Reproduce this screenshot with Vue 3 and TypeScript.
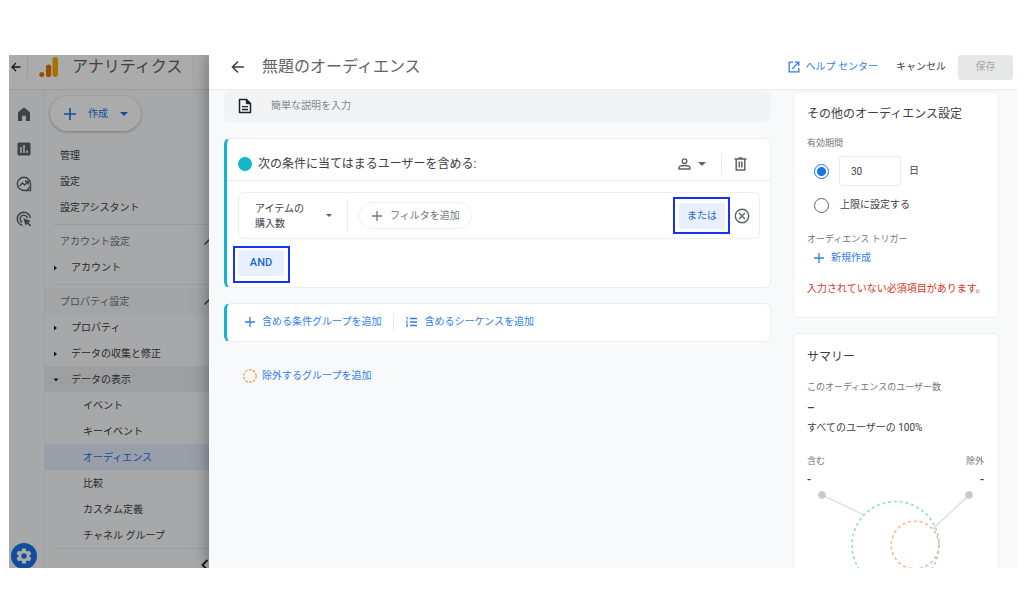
<script setup lang="ts">
import { ref } from 'vue'

interface NavRow {
  label: string
  kind: 'plain' | 'heading' | 'closed' | 'open' | 'child'
  active?: boolean
}

const navGroups: NavRow[][] = [
  [
    { label: '管理', kind: 'plain' },
    { label: '設定', kind: 'plain' },
    { label: '設定アシスタント', kind: 'plain' },
  ],
  [
    { label: 'アカウント設定', kind: 'heading' },
    { label: 'アカウント', kind: 'closed' },
  ],
  [
    { label: 'プロパティ設定', kind: 'heading', active: true },
    { label: 'プロパティ', kind: 'closed' },
    { label: 'データの収集と修正', kind: 'closed' },
    { label: 'データの表示', kind: 'open' },
    { label: 'イベント', kind: 'child' },
    { label: 'キーイベント', kind: 'child' },
    { label: 'オーディエンス', kind: 'child', active: true },
    { label: '比較', kind: 'child' },
    { label: 'カスタム定義', kind: 'child' },
    { label: 'チャネル グループ', kind: 'child' },
  ],
]

const duration = ref('days')
const days = ref('30')
const description = ref('')
</script>

<template>
  <div class="page">
    <div class="frame">
      <div class="under">
        <header class="under-head">
          <button class="icon-btn back-small" aria-label="戻る">
            <svg width="10" height="10" viewBox="0 0 10 10"><path d="M9.5 5H1.2M5 1L1 5l4 4" fill="none" stroke="#202124" stroke-width="1.3" /></svg>
          </button>
          <svg class="logo" width="20" height="22" viewBox="0 0 20 22">
            <rect x="13.5" y="1" width="5.5" height="20" rx="2.7" fill="#f9ab00" />
            <rect x="7" y="8.5" width="5.2" height="12.5" rx="2.6" fill="#e37400" />
            <circle cx="2.8" cy="18.5" r="2.5" fill="#e37400" />
          </svg>
          <span class="product">アナリティクス</span>
          <span class="head-rule"></span>
        </header>
        <div class="under-body">
          <div class="rail">
            <a href="#" aria-label="ホーム">
              <svg width="16" height="16" viewBox="0 0 16 16"><path d="M2 6.2L8 1.5l6 4.7V15H9.8V9.8H6.2V15H2z" fill="#5f6368" /></svg>
            </a>
            <a href="#" aria-label="レポート">
              <svg width="16" height="16" viewBox="0 0 16 16"><rect x="1.5" y="1.5" width="13" height="13" rx="1.5" fill="#5f6368" /><path d="M5 6v6M8 4v8M11 9.5V12" stroke="#fff" stroke-width="1.5" /></svg>
            </a>
            <a href="#" aria-label="探索">
              <svg width="16" height="16" viewBox="0 0 16 16" fill="none" stroke="#5f6368" stroke-width="1.4"><path d="M14.5 14.5H8A6.6 6.6 0 1 1 14.5 8z" /><path d="M3.5 10l3-3 2 2 3.3-3.3M9 5.3h3.2v3.2M10.500 14.500l4-4" /></svg>
            </a>
            <a href="#" aria-label="広告">
              <svg width="16" height="16" viewBox="0 0 16 16" fill="none" stroke="#5f6368" stroke-width="1.5"><path d="M6.6 14.4A6.6 6.6 0 1 1 14.400 7" /><path d="M6.2 11.2A3.7 3.7 0 1 1 11.4 7" /><path d="M7.3 7.3l7.7 2.6-2.9 1.3 3.1 3.1-1.2 1.2-3.1-3.1-1.2 2.7z" fill="#5f6368" stroke="none" /></svg>
            </a>
            <a href="#" class="gear" aria-label="管理">
              <svg width="18" height="18" viewBox="0 0 24 24"><path fill="#fff" fill-rule="evenodd" d="M19.4 13c0-.3.1-.6.1-1s0-.7-.1-1l2.1-1.6c.2-.2.3-.4.1-.7l-2-3.4c-.1-.3-.4-.3-.6-.2l-2.5 1c-.5-.4-1.1-.7-1.7-1l-.4-2.6c0-.3-.2-.5-.5-.5h-4c-.2 0-.4.2-.5.5L9 5.1c-.6.3-1.2.6-1.7 1l-2.5-1c-.2-.1-.5 0-.6.2l-2 3.4c-.1.3-.1.5.1.7L4.500 11c0 .3-.1.6-.1 1s0 .7.1 1l-2.1 1.6c-.2.2-.3.4-.1.7l2 3.4c.1.3.4.3.6.2l2.5-1c.5.4 1.1.7 1.7 1l.4 2.6c0 .3.2.5.5.5h4c.2 0 .4-.2.5-.5l.4-2.6c.6-.3 1.2-.6 1.7-1l2.5 1c.2.1.5 0 .6-.2l2-3.4c.1-.3.1-.5-.1-.7zM12 8.400a3.6 3.6 0 1 1 0 7.2 3.6 3.6 0 0 1 0-7.2z" /></svg>
            </a>
          </div>
          <nav class="nav">
            <button class="create">
              <svg width="12" height="12" viewBox="0 0 12 12"><path d="M6 0v12M0 6h12" stroke="#1a73e8" stroke-width="1.6" /></svg>
              <span>作成</span>
              <svg width="8" height="4" viewBox="0 0 8 4"><path d="M0 0h8L4 4z" fill="#1a73e8" /></svg>
            </button>
            <ul v-for="(group, g) in navGroups" :key="g" class="group">
              <li v-for="row in group" :key="row.label">
                <a href="#" class="row" :class="[row.kind, { active: row.active }]">
                  <svg v-if="row.kind === 'closed'" class="tri" width="6" height="6" viewBox="0 0 6 6"><path d="M1 .5l3 2.5-3 2.5z" fill="#202124" /></svg>
                  <svg v-if="row.kind === 'open'" class="tri" width="6" height="6" viewBox="0 0 6 6"><path d="M.5 1.5h5L3 4.500z" fill="#202124" /></svg>
                  <span>{{ row.label }}</span>
                  <svg v-if="row.kind === 'heading'" class="up" width="10" height="6" viewBox="0 0 10 6"><path d="M.5 5.5L5 1l4.5 4.5" fill="none" stroke="#3c4043" stroke-width="1.3" /></svg>
                </a>
              </li>
            </ul>
            <div class="nav-foot">
              <button class="icon-btn" aria-label="閉じる">
                <svg width="8" height="12" viewBox="0 0 8 12"><path d="M6.5 1L1.5 6l5 5" fill="none" stroke="#202124" stroke-width="1.8" /></svg>
              </button>
            </div>
          </nav>
        </div>
        <div class="scrim"></div>
      </div>

      <main class="drawer">
        <header class="drawer-head">
          <button class="icon-btn" aria-label="戻る">
            <svg width="14" height="14" viewBox="0 0 14 14"><path d="M13 7H2M7 1.5L1.500 7 7 12.5" fill="none" stroke="#3c4043" stroke-width="1.6" /></svg>
          </button>
          <h1>無題のオーディエンス</h1>
          <a href="#" class="help">
            <svg width="12" height="12" viewBox="0 0 12 12" fill="none" stroke="#2f7de9" stroke-width="1.3"><path d="M5 1.2H1.2v9.6h9.6V7M7 1.2h3.8V5M10.6 1.4L4.3 7.7" /></svg>
            <span>ヘルプ センター</span>
          </a>
          <button class="cancel">キャンセル</button>
          <button class="save" disabled>保存</button>
        </header>

        <div class="content">
          <section class="builder">
            <label class="desc">
              <svg width="14" height="16" viewBox="0 0 14 16" fill="none" stroke="#202124" stroke-width="1.5"><path d="M1.5 1.5h7l4 4v9h-11z" stroke-linejoin="round" /><path d="M8.3 1.5v4.2h4.2z" fill="#202124" stroke-width="1" /><path d="M4 8.700h6M4 11.5h6" stroke-width="1.3" /></svg>
              <input v-model="description" type="text" placeholder="簡単な説明を入力" aria-label="説明" />
            </label>

            <article class="card rule">
              <div class="rule-head">
                <span class="dot"></span>
                <h2>次の条件に当てはまるユーザーを含める:</h2>
                <button class="icon-btn scope" aria-label="範囲">
                  <svg width="13" height="12" viewBox="0 0 13 12" fill="none" stroke="#5f6368" stroke-width="1.4"><circle cx="6.5" cy="3.2" r="2.3" /><path d="M1 11V9.7C1 8 4 7.5 6.5 7.5S12 8 12 9.7V11z" /></svg>
                  <svg width="8" height="4" viewBox="0 0 8 4"><path d="M0 0h8L4 4z" fill="#5f6368" /></svg>
                </button>
                <button class="icon-btn trash" aria-label="削除">
                  <svg width="13" height="14" viewBox="0 0 13 14" fill="none" stroke="#5f6368" stroke-width="1.5"><path d="M.5 2h12M4.5 1h4M2.2 2v11h8.6V2M5.200 4.500v6M7.800 4.500v6" /></svg>
                </button>
              </div>
              <div class="rule-body">
                <div class="condition">
                  <button class="metric">
                    <span>アイテムの<br />購入数</span>
                    <svg width="6" height="3" viewBox="0 0 6 3"><path d="M0 0h6L3 3z" fill="#5f6368" /></svg>
                  </button>
                  <button class="filter">
                    <svg width="10" height="10" viewBox="0 0 10 10"><path d="M5 0v10M0 5h10" stroke="#70757a" stroke-width="1.3" /></svg>
                    <span>フィルタを追加</span>
                  </button>
                  <div class="mark mark-or"><button class="chip">または</button></div>
                  <button class="icon-btn" aria-label="条件を削除">
                    <svg width="16" height="16" viewBox="0 0 16 16" fill="none" stroke="#5f6368" stroke-width="1.4"><circle cx="8" cy="8" r="6.7" /><path d="M5 5l6 6M11 5l-6 6" /></svg>
                  </button>
                </div>
                <div class="mark mark-and"><button class="chip and">AND</button></div>
              </div>
            </article>

            <div class="card adders">
              <button class="link-btn">
                <svg width="10" height="10" viewBox="0 0 10 10"><path d="M5 0v10M0 5h10" stroke="#2f7de9" stroke-width="1.3" /></svg>
                <span>含める条件グループを追加</span>
              </button>
              <span class="sep"></span>
              <button class="link-btn">
                <svg width="11" height="10" viewBox="0 0 11 10" stroke="#2f7de9" fill="none"><path d="M4 1.5h7M4 5h7M4 8.5h7" stroke-width="1.3" /><path d="M0 .5h1.300v2.200M0 4h1.600L.2 6h1.600M0 7.500h1.500v2.200H0M.5 8.600h1" stroke-width=".8" /></svg>
                <span>含めるシーケンスを追加</span>
              </button>
            </div>

            <button class="link-btn exclude">
              <svg width="14" height="14" viewBox="0 0 14 14"><circle cx="7" cy="7" r="6.2" fill="none" stroke="#fa903e" stroke-width="1.2" stroke-dasharray="2.6 1.3" /></svg>
              <span>除外するグループを追加</span>
            </button>
          </section>

          <aside class="side">
            <section class="card panel settings">
              <h2>その他のオーディエンス設定</h2>
              <div class="caption term">有効期間</div>
              <div class="opt opt-days">
                <input v-model="duration" type="radio" name="duration" value="days" aria-label="日数を指定" />
                <input id="days" v-model="days" class="days" type="text" />
                <label for="days">日</label>
              </div>
              <div class="opt opt-max">
                <input id="max" v-model="duration" type="radio" name="duration" value="max" />
                <label for="max">上限に設定する</label>
              </div>
              <div class="caption trigger">オーディエンス トリガー</div>
              <button class="link-btn new">
                <svg width="10" height="10" viewBox="0 0 10 10"><path d="M5 0v10M0 5h10" stroke="#2f7de9" stroke-width="1.3" /></svg>
                <span>新規作成</span>
              </button>
              <p class="error">入力されていない必須項目があります。</p>
            </section>

            <section class="card panel summary">
              <h2>サマリー</h2>
              <div class="caption term">このオーディエンスのユーザー数</div>
              <div class="total">–</div>
              <div class="share">すべてのユーザーの 100%</div>
              <div class="ends caption"><span>含む</span><span>除外</span></div>
              <div class="ends values"><span>-</span><span>-</span></div>
              <svg class="venn" viewBox="0 0 177 106" fill="none">
                <path d="M15 8l42 20M162 8l-36 34" stroke="#dadada" stroke-width="1.2" />
                <circle cx="15" cy="8" r="3.8" fill="#cacaca" />
                <circle cx="162" cy="8" r="3.8" fill="#cacaca" />
                <circle cx="88.5" cy="58" r="43.5" stroke="#8edbe5" stroke-width="1.6" stroke-dasharray="3 2.8" />
                <circle cx="108" cy="58" r="23.8" stroke="#fcb78a" stroke-width="1.6" stroke-dasharray="3 2.8" />
              </svg>
            </section>
          </aside>
        </div>
      </main>
    </div>
  </div>
</template>

<style>
body {
  margin: 0;
  background: #fff;
}
</style>

<style scoped>
* {
  box-sizing: border-box;
}

.page {
  height: 100vh;
  padding: 55px 7px 46px 9px;
  font-family: Roboto, 'Noto Sans CJK JP', sans-serif;
  font-size: 10px;
  line-height: 16px;
  color: #3c4043;
}

.frame {
  display: flex;
  height: 100%;
  overflow: hidden;
}

button,
input {
  margin: 0;
  padding: 0;
  border: 0;
  background: none;
  font: inherit;
  color: inherit;
}

button {
  display: inline-flex;
  align-items: center;
  justify-content: center;
}

a {
  color: inherit;
  text-decoration: none;
}

svg {
  display: block;
  flex: none;
}

h1,
h2,
p,
ul {
  margin: 0;
  padding: 0;
  font-weight: 400;
  list-style: none;
}

/* Dimmed console behind the drawer */
.under {
  position: relative;
  display: flex;
  flex-direction: column;
  flex: none;
  width: 200px;
  background: #fafbfd;
  overflow: hidden;
}

.scrim {
  position: absolute;
  inset: 0;
  background: rgba(0, 0, 0, 0.33);
}

.under-head {
  display: flex;
  align-items: center;
  flex: none;
  height: 35px;
  padding-bottom: 10px;
  border-bottom: 1px solid #e8eaed;
  background: #fff;
}

.back-small {
  width: 19px;
  height: 24px;
  padding-left: 2px;
  justify-content: flex-start;
  border-right: 1px solid #e8eaed;
}

.logo {
  margin-left: 11px;
}

.product {
  margin-left: 13px;
  font-size: 16px;
  line-height: 18px;
  color: #5f6368;
}

.head-rule {
  width: 1px;
  height: 24px;
  margin-left: 10px;
  background: #f1f3f4;
}

.under-body {
  display: flex;
  flex: 1;
  min-height: 0;
}

.rail {
  display: flex;
  flex-direction: column;
  align-items: center;
  gap: 19px;
  flex: none;
  width: 36px;
  padding: 16px 5px 0 0;
  border-right: 1px solid #eceef0;
}

.gear {
  display: flex;
  align-items: center;
  justify-content: center;
  flex: none;
  width: 26px;
  height: 26px;
  margin: auto 0 -1px;
  border-radius: 50%;
  background: #1a73e8;
}

.nav {
  flex: 1;
  min-width: 0;
}

.create {
  gap: 12px;
  height: 35px;
  margin: 6px 0 11px 5px;
  padding: 0 13px 0 14px;
  border-radius: 18px;
  background: #fff;
  box-shadow: 0 1px 3px rgba(60, 64, 67, 0.4);
  color: #1a73e8;
}

.group + .group {
  margin-top: 4px;
  padding-top: 3px;
  border-top: 1px solid;
  border-image: linear-gradient(to right, transparent 9px, #e8eaed 9px) 1;
}

.row {
  display: flex;
  align-items: center;
  height: 26px;
  padding: 1px 0 0 15px;
  color: #3c4043;
}

.heading {
  color: #70757a;
}

.heading.active {
  background: #f4f5f7;
}

.open {
  background: #ebedef;
}

.closed,
.open {
  padding-left: 8px;
}

.tri {
  margin-right: 12px;
}

.child {
  padding-left: 38px;
}

.child.active {
  background: #e4edfb;
  color: #1a73e8;
}

.up {
  margin: 0 -5px 0 auto;
}

.nav-foot {
  display: flex;
  justify-content: flex-end;
  margin-left: 9px;
  padding-top: 10px;
  border-top: 1px solid #e8eaed;
}

/* Drawer */
.drawer {
  position: relative;
  display: flex;
  flex-direction: column;
  flex: 1;
  min-width: 0;
  background: #f8f9fb;
  box-shadow: 0 0 16px rgba(0, 0, 0, 0.4);
}

.drawer-head {
  display: flex;
  align-items: center;
  flex: none;
  height: 35px;
  padding: 0 4px 10px 22px;
  border-bottom: 1px solid #e8eaed;
  background: #fff;
}

.drawer-head h1 {
  margin-left: 17px;
  margin-right: auto;
  font-size: 16px;
  color: #5f6368;
}

.help {
  display: flex;
  align-items: center;
  gap: 6px;
  color: #2f7de9;
}

.cancel {
  margin: 0 12px 0 18px;
}

.save {
  width: 55px;
  height: 25px;
  border-radius: 3px;
  background: #e6e7e7;
  color: #a6a8aa;
}

.content {
  display: flex;
  align-items: flex-start;
  gap: 22px;
  flex: 1;
  min-height: 0;
  padding: 1px 18px 0 15px;
  overflow: hidden;
}

.builder {
  flex: 1;
  min-width: 0;
}

.side {
  flex: none;
  width: 206px;
}

.card {
  border: 1px solid #eceef0;
  border-radius: 6px;
  background: #fff;
}

.desc {
  display: flex;
  align-items: center;
  gap: 19px;
  height: 31px;
  margin-bottom: 16px;
  padding: 0 14px 2px;
  border-radius: 6px;
  background: #f1f3f4;
}

.desc input {
  flex: 1;
  outline: 0;
}

.desc input::placeholder {
  color: #80868b;
  opacity: 1;
}

.rule,
.adders {
  border-left: 3px solid #12b5cb;
  margin-bottom: 15px;
}

.rule-head {
  display: flex;
  align-items: center;
  height: 42px;
  padding: 8px 23px 0 11px;
  border-bottom: 1px solid #e8eaed;
}

.dot {
  flex: none;
  width: 14px;
  height: 14px;
  margin-right: 6px;
  border-radius: 50%;
  background: #12b5cb;
}

.rule-head h2 {
  font-size: 12px;
}

.scope {
  gap: 7px;
  margin-left: auto;
  padding-right: 15px;
}

.trash {
  height: 22px;
  padding-left: 12px;
  border-left: 1px solid #e8eaed;
}

.rule-body {
  padding: 11px 10px 4px 6px;
}

.condition {
  display: flex;
  align-items: center;
  height: 47px;
  margin-left: 5px;
  padding-right: 9px;
  border: 1px solid #eceef0;
  border-radius: 6px;
}

.metric {
  gap: 22px;
  height: 33px;
  padding: 0 15px 0 16px;
  border-right: 1px solid #e8eaed;
  line-height: 15px;
  text-align: left;
}

.filter {
  gap: 8px;
  height: 27px;
  margin-left: 11px;
  padding: 0 11px 0 12px;
  border: 1px dotted #e0e2e5;
  border-radius: 14px;
  color: #70757a;
}

.mark {
  width: 57px;
  height: 37px;
  border: 2px solid #1433f5;
}

.mark-or {
  margin: 0 4px 0 auto;
  padding: 4px 3px 0 4px;
}

.mark-and {
  margin-top: 7px;
  padding: 2px 3px 0;
}

.chip {
  width: 46px;
  height: 26px;
  border-radius: 3px;
  background: #e8f0fe;
  color: #1967d2;
}

.and {
  font-size: 11px;
  font-weight: 500;
}

.adders {
  display: flex;
  align-items: center;
  height: 39px;
  padding: 0 0 2px 18px;
}

.link-btn {
  gap: 7px;
  color: #2f7de9;
}

.sep {
  width: 1px;
  height: 18px;
  margin: 0 12px;
  background: #e8eaed;
}

.exclude {
  gap: 5px;
  margin: 11px 0 0 19px;
}

.panel {
  margin-bottom: 15px;
  padding: 14px 14px 20px 13px;
}

.panel h2 {
  font-size: 12px;
}

.caption {
  font-size: 9px;
  line-height: 12px;
  color: #70757a;
}

.term {
  margin-top: 15px;
}

.opt {
  display: flex;
  align-items: center;
  padding-left: 7px;
}

.opt input[type='radio'] {
  flex: none;
  width: 15px;
  height: 15px;
  appearance: none;
  border: 1px solid #5f6368;
  border-radius: 50%;
}

.opt input[type='radio']:checked {
  border: 1px solid #1a73e8;
  background: radial-gradient(circle, #1a73e8 4px, transparent 5px);
}

.opt-days {
  margin-top: 7px;
}

.days {
  width: 62px;
  height: 30px;
  margin: 0 8px 0 10px;
  padding-left: 11px;
  border: 1px solid #e8eaed;
  border-radius: 3px;
}

.opt-max {
  gap: 11px;
  height: 20px;
  margin-top: 9px;
}

.trigger {
  margin-top: 18px;
}

.new {
  display: flex;
  height: 18px;
  margin: 4px 0 14px 7px;
}

.error {
  color: #d93025;
  white-space: nowrap;
}

.summary h2 {
  line-height: 18px;
}

.total {
  margin-top: 8px;
  font-size: 12px;
  line-height: 14px;
  font-weight: 500;
}

.share {
  margin-top: 6px;
  line-height: 14px;
}

.ends {
  display: flex;
  justify-content: space-between;
}

.ends.caption {
  margin-top: 20px;
}

.values {
  margin-top: 6px;
  font-size: 12px;
  line-height: 14px;
  font-weight: 500;
}

.venn {
  width: 100%;
}
</style>
